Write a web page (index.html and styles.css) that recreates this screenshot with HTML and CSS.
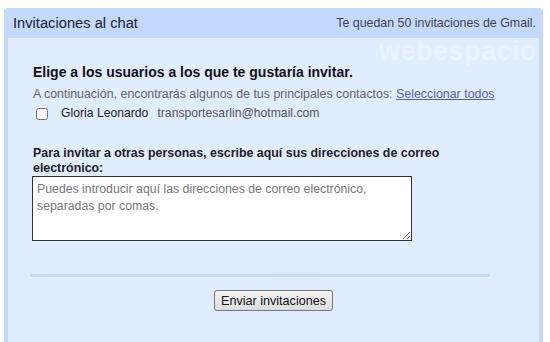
FILE: index.html
```html
<!DOCTYPE html>
<html lang="es">
  <head>
    <meta charset="UTF-8" />
    <title>Invitaciones al chat</title>
    <link rel="stylesheet" href="styles.css">
  </head>
  <body>
    <div class="panel">
      <div class="panel-header">
        <span class="title">Invitaciones al chat</span>
        <span class="remaining">Te quedan 50 invitaciones de Gmail.</span>
      </div>
      <div class="watermark">webespacio</div>
      <div class="panel-body">
        <h3>Elige a los usuarios a los que te gustaría invitar.</h3>
        <p class="hint">
          A continuación, encontrarás algunos de tus principales contactos:
          <a href="#">Seleccionar todos</a>
        </p>
        <label class="contact">
          <input type="checkbox" />
          <span class="name">Gloria Leonardo</span>
          <span class="email">transportesarlin@hotmail.com</span>
        </label>

        <label class="others" for="emails">Para invitar a otras personas, escribe aquí sus direcciones de correo electrónico:</label>
        <textarea id="emails" placeholder="Puedes introducir aquí las direcciones de correo electrónico, separadas por comas."></textarea>

        <hr class="divider" />
        <div class="actions">
          <button type="button">Enviar invitaciones</button>
        </div>
      </div>
    </div>
  </body>
</html>
```

FILE: styles.css
```css
body {
  font-family: "Liberation Sans", Arial, sans-serif;
  background-color: #fff;
  margin: 0;
  padding: 8px 7px 0 4px;
}
.panel {
  position: relative;
  background-color: #c3d9ff;
  border-radius: 4px 4px 0 0;
  padding: 0 4px;
  height: 334px;
  box-sizing: border-box;
}
.panel-header {
  display: flex;
  justify-content: space-between;
  align-items: center;
  height: 30px;
  padding: 0 3px 0 5px;
}
.title {
  font-size: 14.7px;
  color: #222;
}
.remaining {
  font-size: 12.4px;
  color: #444;
}
.watermark {
  position: absolute;
  top: 28px;
  right: 6px;
  font-size: 27px;
  font-weight: bold;
  color: rgba(255, 255, 255, 0.35);
  letter-spacing: 0.5px;
}
.panel-body {
  background-color: #e0ecff;
  height: 304px;
  padding: 26px 0 0 25px;
  box-sizing: border-box;
}
h3 {
  font-size: 14px;
  line-height: 16px;
  margin: 0 0 7px;
  color: #111;
}
.hint {
  font-size: 12.4px;
  line-height: 15px;
  color: #666;
  margin: 0 0 4px;
}
.hint a {
  color: #5b5ea6;
}
.contact {
  display: flex;
  align-items: center;
  font-size: 12.2px;
  line-height: 15px;
  margin-left: 3px;
}
.contact input {
  margin: 0 13px 0 0;
  width: 12px;
  height: 12px;
}
.name {
  color: #222;
  margin-right: 9px;
}
.email {
  color: #555;
}
.others {
  display: block;
  font-size: 12.4px;
  font-weight: bold;
  color: #222;
  margin-top: 25px;
  width: 420px;
  line-height: 15px;
}
textarea {
  display: block;
  width: 380px;
  height: 65px;
  margin-left: -1px;
  border: 1px solid #333;
  box-sizing: border-box;
  padding: 4px 4px;
  font-family: "Liberation Sans", Arial, sans-serif;
  font-size: 12.3px;
  line-height: 17px;
  resize: both;
}
textarea::placeholder {
  color: #777;
}
.divider {
  border: none;
  height: 3px;
  background-color: #c3d9ff;
  margin: 33px 0 0 -3px;
  width: 460px;
}
.actions {
  text-align: center;
  margin: 13px 0 0 -25px;
}
button {
  font-family: "Liberation Sans", Arial, sans-serif;
  font-size: 12.6px;
  color: #111;
  background: linear-gradient(#f4f4f4, #dcdcdc);
  border: 1px solid #777;
  border-radius: 3px;
  height: 21px;
  padding: 0 6px;
}
```
